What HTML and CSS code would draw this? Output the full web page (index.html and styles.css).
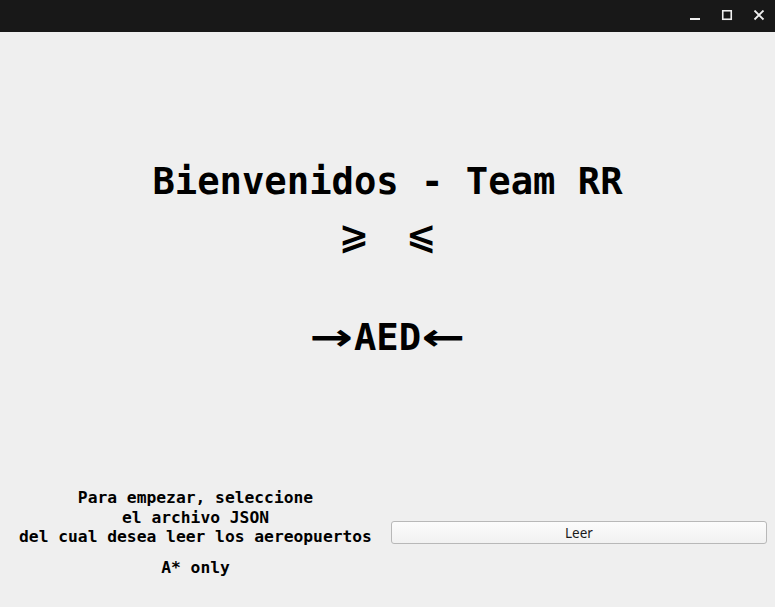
FILE: index.html
```html
<!DOCTYPE html>
<html lang="es">
<head>
<meta charset="utf-8">
<title>Team RR</title>
<link rel="stylesheet" href="styles.css">
</head>
<body>
<div class="window">
  <header class="titlebar">
    <div class="controls">
      <svg class="ctl" width="12" height="12" viewBox="0 0 12 12"><rect x="1" y="8" width="10" height="2" fill="#f0f0f0"/></svg>
      <svg class="ctl" width="12" height="12" viewBox="0 0 12 12"><rect x="1.75" y="0.75" width="8.5" height="8.5" fill="none" stroke="#f0f0f0" stroke-width="1.6"/></svg>
      <svg class="ctl" width="12" height="12" viewBox="0 0 12 12"><path d="M1.5 0.5 L10.5 9.5 M10.5 0.5 L1.5 9.5" stroke="#f0f0f0" stroke-width="1.8"/></svg>
    </div>
  </header>
  <main class="content">
    <h1 class="title">Bienvenidos - Team RR</h1>
    <div class="ops"><span class="cell2">⩾</span><span class="cell1"></span><span class="cell2">⩽</span></div>
    <div class="aed"><span class="cell2 arrow">→</span>AED<span class="cell2 arrow">←</span></div>
    <section class="bottom">
      <div class="info">
        <p class="msg">Para empezar, seleccione<br>el archivo JSON<br>del cual desea leer los aereopuertos</p>
        <p class="note">A* only</p>
      </div>
      <div class="action">
        <button class="btn" type="button">Leer</button>
      </div>
    </section>
  </main>
</div>
</body>
</html>
```
FILE: styles.css
```css
html, body {
  margin: 0;
  padding: 0;
  background: #efefef;
}
.window {
  width: 775px;
  height: 607px;
  display: flex;
  flex-direction: column;
  overflow: hidden;
}
.titlebar {
  height: 32px;
  flex: 0 0 32px;
  background: #181818;
  display: flex;
  justify-content: flex-end;
  align-items: flex-start;
}
.controls {
  display: flex;
  gap: 20px;
  padding: 10px 10px 0 0;
}
.ctl { display: block; }
.content {
  flex: 1;
  display: flex;
  flex-direction: column;
  font-family: "DejaVu Sans Mono", "Liberation Mono", monospace;
  font-weight: bold;
  color: #000;
}
.title {
  margin: 127px 0 0;
  font-size: 37.2px;
  line-height: 44px;
  text-align: center;
  font-weight: bold;
}
.ops, .aed {
  display: flex;
  justify-content: center;
  font-size: 37.2px;
  line-height: 44px;
}
.ops { margin-top: 11px; }
.aed { margin-top: 57px; }
.cell2 {
  display: inline-block;
  width: 44.8px;
  text-align: center;
}
.cell1 {
  display: inline-block;
  width: 22.4px;
}
.ops .cell2 {
  font-family: "DejaVu Sans", sans-serif;
  font-size: 36px;
}
.arrow {
  font-family: "DejaVu Sans", sans-serif;
  transform: scaleX(1.4);
}
.bottom {
  margin-top: auto;
  display: grid;
  grid-template-columns: 391px 1fr;
  align-items: center;
  padding: 0 8px 30px 0;
}
.info {
  text-align: center;
  font-size: 16.3px;
  line-height: 19.5px;
}
.msg { margin: 0; }
.note { margin: 11px 0 0; }
.action { display: flex; }
.btn {
  flex: 1;
  height: 23px;
  margin: 0;
  border: 1px solid #b8b8b8;
  border-radius: 3px;
  background: linear-gradient(#fcfcfc, #f1f1f1);
  font-family: "Noto Sans", "Open Sans", sans-serif;
  font-size: 13.5px;
  color: #1a1a1a;
  padding: 0;
}
```
